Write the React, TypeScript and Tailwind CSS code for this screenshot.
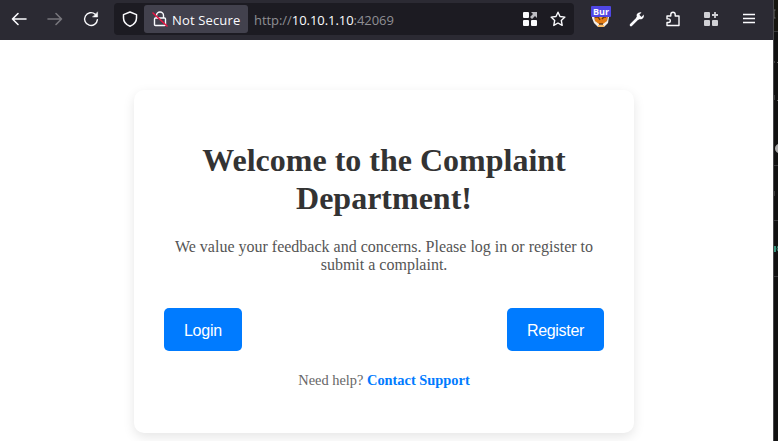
import type { ReactNode } from "react";

function Icon({ size = 16, className = "", children }: { size?: number; className?: string; children: ReactNode }) {
  return (
    <svg width={size} height={size} viewBox={`0 0 ${size} ${size}`} fill="none" stroke="currentColor" strokeWidth="1.4" strokeLinecap="round" strokeLinejoin="round" className={`block shrink-0 ${className}`}>
      {children}
    </svg>
  );
}

function Toolbar() {
  return (
    <header className="flex h-10 w-full items-start bg-[#2b2a33] pt-[3px] text-[#fbfbfe]">
      <div className="flex h-8 w-[114px] shrink-0 items-center gap-5 pl-[11px]">
        <Icon><path d="M15 8H1.5M7 2.5 1.5 8 7 13.5" strokeWidth="1.6" /></Icon>
        <Icon className="text-[#77767c]"><path d="M1 8h13.5M9 2.5 14.5 8 9 13.5" strokeWidth="1.6" /></Icon>
        <Icon>
          <path d="M14.4 8.6A6.4 6.4 0 1 1 12.2 3.2" />
          <path d="M14.6 1.2V6H9.8z" fill="currentColor" strokeWidth=".5" />
        </Icon>
      </div>
      <div className="flex h-8 w-[460px] shrink-0 items-center rounded-[4px] bg-[#1c1b22]">
        <Icon className="ml-2 mr-[6px]"><path d="M8 1 14.5 3.6V7c0 3.6-2.6 6.7-6.5 8.2C4.1 13.7 1.5 10.6 1.5 7V3.6z" strokeWidth="1.5" /></Icon>
        <div className="flex h-7 w-[104px] items-center rounded-[3px] bg-[#42414d] pl-2">
          <Icon>
            <path d="M4.500 7V4.500a3.500 3.500 0 0 1 7 0V7M3.500 7h9q1 0 1 1v5.500q0 1-1 1h-9q-1 0-1-1V8q0-1 1-1" />
            <path d="m1 2 14 13" stroke="#e91543" strokeWidth="1.600" />
          </Icon>
          <span className="ml-1 whitespace-nowrap pt-px font-['Open_Sans',sans-serif] text-[13px] leading-7 tracking-[0.150px]">Not Secure</span>
        </div>
        <span className="ml-[6px] whitespace-nowrap pt-px font-['Open_Sans',sans-serif] text-[13px] leading-8 tracking-[-0.05px] text-[#8f8f94]">
          http://<span className="text-[#fbfbfe]">10.10.1.10</span>:42069
        </span>
        <Icon className="ml-auto mr-3">
          <g fill="currentColor" stroke="none">
            <rect x="1" y="1" width="6" height="6" rx="1" />
            <rect x="1" y="9" width="6" height="6" rx="1" />
            <rect x="9" y="9" width="6" height="6" rx="1" />
          </g>
          <path d="M9 1h6v6l-2-2-3 3-2-2 3-3z" fill="#bcbcc2" stroke="none" />
        </Icon>
        <Icon className="mr-2"><path d="m8 1.200 2 4.300 4.900.6-3.600 3.300.9 5L8 12l-4.200 2.400.9-5L1.100 6.100 6 5.500z" /></Icon>
      </div>
      <div className="flex h-8 flex-1 items-center text-[#fbfbfe]">
        <div className="relative ml-[17px] mr-[17px] h-8 w-[21px] shrink-0">
          <svg width="20" height="27" viewBox="0 0 20 27" className="block">
            <path d="M3 10h14q0 9-4 13H7q-4-4-4-13" fill="#e47c13" />
            <path d="M1 13h2l1 5 4 3h4l4-3 1-5 1 1-1 6-4 4H7l-4-4-2-5z" fill="#f4eee6" />
            <path d="M4 14h3l2 3M11 16l2-2h2M8 21h4" stroke="#65390d" strokeWidth="1.300" fill="none" />
            <path d="M9 14h2M7 23h6" stroke="#ffad3b" strokeWidth="1.500" />
          </svg>
          <span className="absolute left-0 top-[3px] flex h-[11px] w-5 items-center justify-center rounded-[1px] bg-[#5047e5] font-['Open_Sans',sans-serif] text-[9px] font-bold leading-[11px]">Bur</span>
        </div>
        <Icon className="mr-5">
          <path d="M2 14 8.500 7.500" strokeWidth="2.600" />
          <path d="M11.500 1.200Q8.500 1 7.600 3.700L7.800 6 7 7l2 2 1-.8q2 .5 3.700-.8 1.700-1.500 1-3.900L12.500 6l-2.200-2.200 2.200-2.400z" fill="currentColor" stroke="none" />
        </Icon>
        <Icon className="mr-[22px]"><path d="M2 5h3.800V3.500a2.200 2.200 0 0 1 4.400 0V5H14v9.500H2v-3h1.500a1.800 1.800 0 0 0 0-3.600H2z" /></Icon>
        <Icon className="mr-[22px] text-[#d0d0d5]">
          <g fill="currentColor" stroke="none"><rect x="1" y="1" width="6" height="6" rx="1" /><rect x="1" y="9" width="6" height="6" rx="1" /><rect x="9" y="9" width="6" height="6" rx="1" /></g>
          <path d="M12 1v6M9 4h6" strokeWidth="1.800" strokeLinecap="butt" />
        </Icon>
        <Icon><path d="M2 3.500h12M2 7.500h12M2 11.500h12" strokeWidth="1.300" strokeLinecap="butt" /></Icon>
      </div>
    </header>
  );
}

function BackgroundWindow() {
  return (
    <aside className="w-[5px] shrink-0 border-l border-[#48484b] bg-[#111111]">
      <svg width="4" height="441" viewBox="0 0 4 441" className="block">
        <path d="M0 0h4v31H0z" fill="#16150f" />
        <path d="M0 31.500h4M0 165.500h4M0 220.500h4M0 276.500h4" stroke="#38383a" />
        <path d="M1.500 10H0v8h1.500M0 61v2M3 62.500h1M0 95v5M3 100.500h1M0 191v5" stroke="#686868" fill="none" />
        <circle cx="6" cy="148.500" r="5" fill="#aaa" />
        <path d="M.5 246v6M1.500 246v6M4 246q-2 3 0 5" stroke="#36917b" fill="none" />
      </svg>
    </aside>
  );
}

export default function App() {
  return (
    <div className="flex h-[441px] w-[778px] overflow-hidden bg-white">
      <div className="flex min-w-0 flex-1 flex-col">
        <Toolbar />
        <main className="flex min-h-0 flex-1 items-start overflow-hidden pl-[134px] pt-[50px] font-['Liberation_Serif',serif]">
          <section className="h-[343px] w-[500px] shrink-0 rounded-[10px] bg-white px-[30px] pt-[51px] text-center shadow-[0_4px_12px_rgba(0,0,0,0.1)]">
            <h1 className="text-[32px] font-bold leading-[38px] text-[#333]">Welcome to the Complaint<br />Department!</h1>
            <p className="mt-[21px] text-base leading-[18px] text-[#555]">We value your feedback and concerns. Please log in or register to submit a complaint.</p>
            <div className="mt-[34px] flex justify-between font-['Liberation_Sans',sans-serif] text-base text-white">
              <button className="h-[43px] w-[78px] rounded-[5px] bg-[#007bff] pt-0.5 tracking-[-0.200px]">Login</button>
              <button className="h-[43px] w-[97px] rounded-[5px] bg-[#007bff] pt-0.5 tracking-[-0.300px]">Register</button>
            </div>
            <p className="mt-[21px] text-[14.4px] leading-[17px] text-[#666]">Need help? <a href="#" className="font-bold text-[#007bff]">Contact Support</a></p>
          </section>
        </main>
      </div>
      <BackgroundWindow />
    </div>
  );
}
